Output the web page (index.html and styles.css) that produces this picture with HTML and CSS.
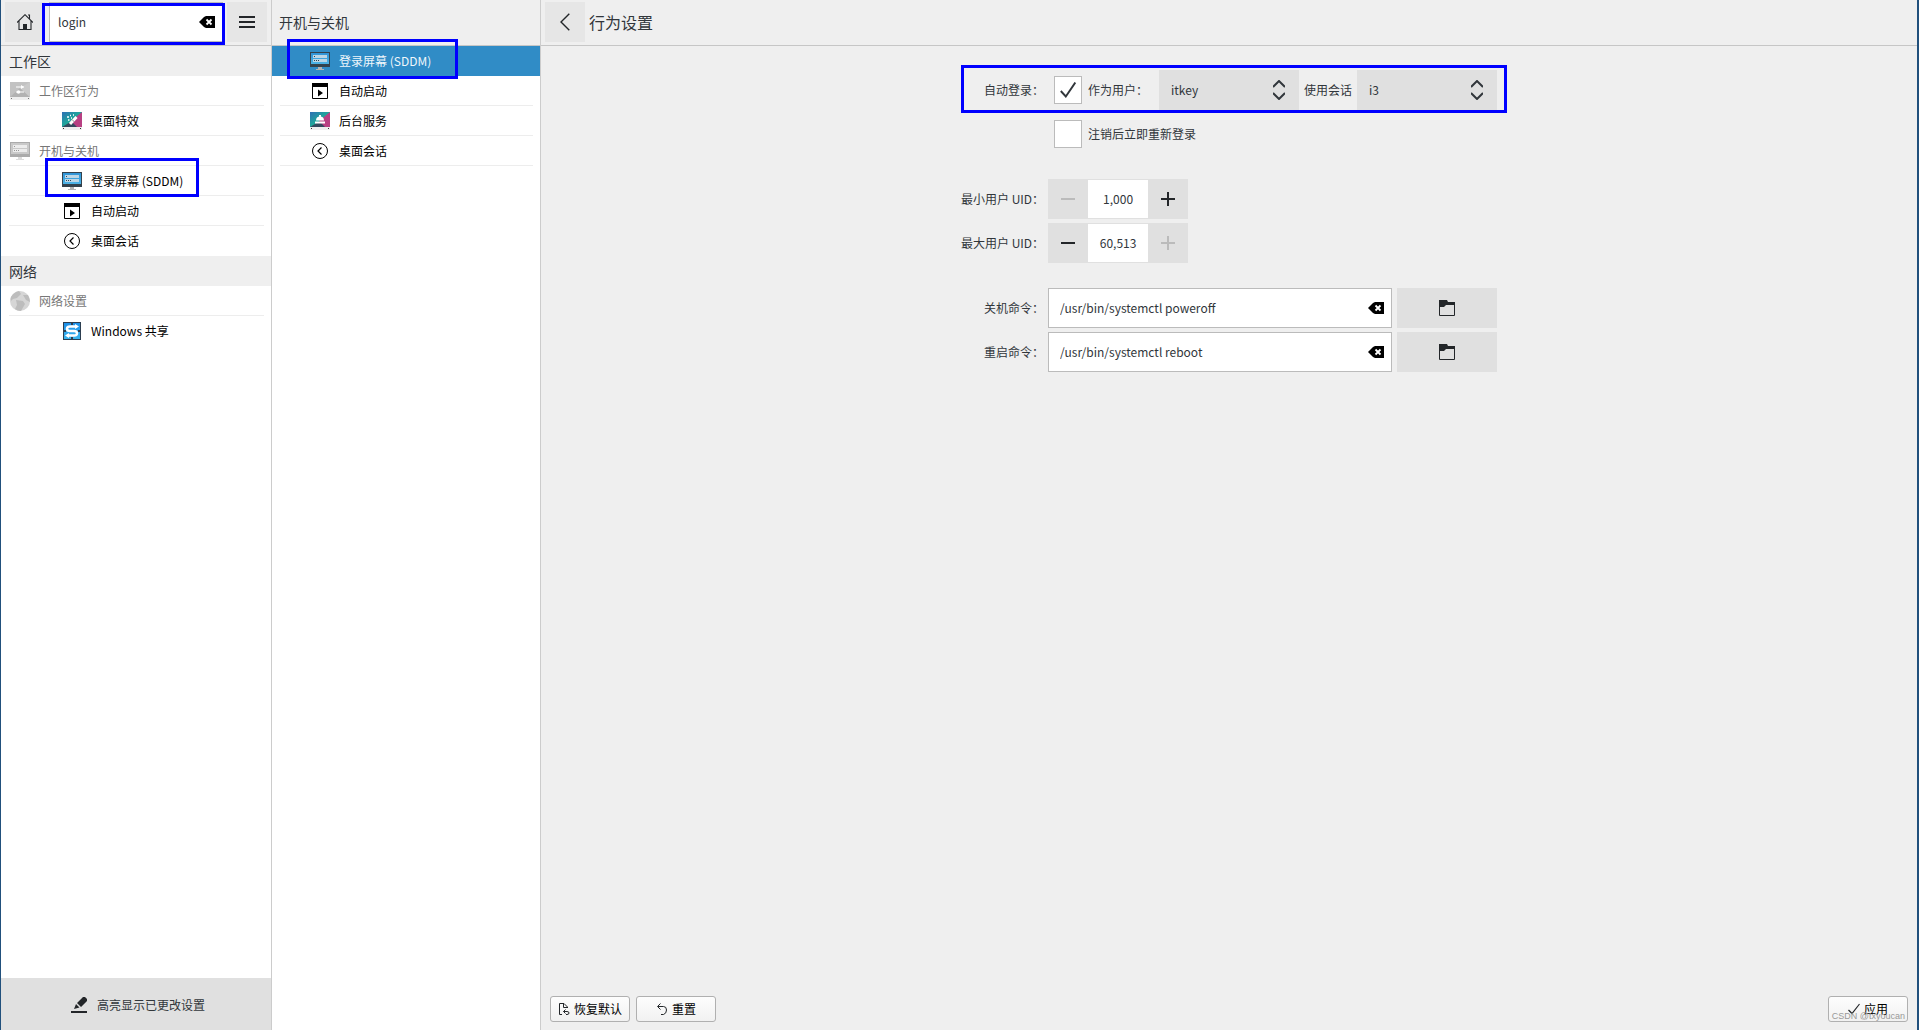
FILE: index.html
```html
<!DOCTYPE html>
<html lang="zh-CN">
<head>
<meta charset="utf-8">
<title>行为设置</title>
<link rel="stylesheet" href="styles.css">
</head>
<body>
<svg class="sprite" aria-hidden="true">
  <defs>
    <linearGradient id="sky" x1="0" y1="0" x2="1" y2="1"><stop offset="0" stop-color="#2f6fb5"/><stop offset=".5" stop-color="#1ea89a"/><stop offset="1" stop-color="#1abc9c"/></linearGradient>
    <linearGradient id="screen" x1="0" y1="0" x2="0" y2="1"><stop offset="0" stop-color="#2f93d6"/><stop offset="1" stop-color="#4db3e6"/></linearGradient>
    <linearGradient id="net" x1="0" y1="0" x2="0" y2="1"><stop offset="0" stop-color="#1d8fe8"/><stop offset="1" stop-color="#3bb5ee"/></linearGradient>
  </defs>
  <symbol id="i-clear" viewBox="0 0 16 12"><path d="M0 6 5 1 7 0H16V12H7L5 11Z" fill="#000"/><path d="M7.500 3.500 12.500 8.500M12.500 3.500 7.500 8.500" stroke="#fff" stroke-width="1.800"/></symbol>
  <symbol id="i-play" viewBox="0 0 16 16"><path d="M.5.5h15v15H.5z" fill="#fff" stroke="#000"/><path d="M0 0h16v4H0zM6 6.500v7l5-3.500z" fill="#000"/></symbol>
  <symbol id="i-session" viewBox="0 0 16 16"><circle cx="8" cy="8" r="7.500" fill="none" stroke="#000"/><path d="M9.500 4.500 6 8l3.500 3.500" fill="none" stroke="#000" stroke-width="1.200"/></symbol>
  <symbol id="i-screen" viewBox="0 0 20 18"><path d="M0 0h20v15H0z" fill="#34424d"/><path d="M1 1h18v11H1z" fill="url(#screen)"/><path d="M3 3h14v3H3zM3 7h14v3H3z" fill="#bcd6e6"/><path d="M4 4.500h1M4 8.500h1M6 8.500h1M8 8.500h1" stroke="#345"/><path d="M8 15h4v2h2v1H6v-1h2z" fill="#b4b4b4"/></symbol>
  <symbol id="i-screen-gray" viewBox="0 0 20 18"><path d="M0 0h20v15H0z" fill="#ababab"/><path d="M1 1h18v11H1z" fill="#c9c9c9"/><path d="M3 3h14v3H3zM3 7h14v3H3z" fill="#ececec"/><path d="M4 4.500h1M4 8.500h1M6 8.500h1M8 8.500h1" stroke="#999"/><path d="M8 15h4v2h2v1H6v-1h2z" fill="#ddd"/></symbol>
  <symbol id="i-folder" viewBox="0 0 16 16"><path d="M.5 1v14.500h15V2.500H9" fill="none" stroke="#232629"/><path d="M0 0h8l1 2h7v3H7L5 7H0z" fill="#232629"/></symbol>
  <symbol id="i-updown" viewBox="0 0 12 20"><path d="M0 7 6 1l6 6M0 13l6 6 6-6" fill="none" stroke="#31363b" stroke-width="2"/></symbol>
</svg>

<div class="window">
  <aside class="sidebar">
    <div class="bar tools">
      <button class="tool" aria-label="主页"><svg width="16" height="16" viewBox="0 0 16 16"><path d="M0 8.500 8 .7l8 7.800M2 7v8.500h12V7M12.500 5V1H11" fill="none" stroke="#232629" stroke-width="1.100"/><path d="M6 10h4v6H6z" fill="#232629"/></svg></button>
      <div class="search marked">
        <input type="text" value="login" aria-label="搜索">
        <button class="clear" aria-label="清除"><svg width="16" height="12"><use href="#i-clear"/></svg></button>
      </div>
      <button class="tool" aria-label="菜单"><svg width="16" height="12" viewBox="0 0 16 12"><path d="M0 1h16M0 6h16M0 11h16" stroke="#232629" stroke-width="2"/></svg></button>
    </div>
    <nav class="nav">
      <h2 class="section">工作区</h2>
      <a href="#" class="row group"><svg width="20" height="18" viewBox="0 0 20 18"><path d="M0 0h20v15H0z" fill="#c2c2c2"/><path d="M0 15 10 6l10 9z" fill="#b2b2b2"/><path d="M20 0v15L10 6z" fill="#cacaca"/><path d="M0 15h20v3H0z" fill="#eee"/><path d="M1 16.500h1M18 16.500h1" stroke="#777"/><path d="M6 5h8M6 10h8" stroke="#fff" stroke-width="1.200"/><path d="m11 3 3 2-3 2z" fill="#fff"/><circle cx="8.500" cy="10" r="1.800" fill="#fff"/></svg>工作区行为</a>
      <a href="#" class="row child"><svg width="20" height="18" viewBox="0 0 20 18"><path d="M0 0h20v15H0z" fill="url(#sky)"/><path d="M0 15 10 9l6 6z" fill="#34495e"/><path d="M20 0v15h-5L9 9z" fill="#b84083"/><path d="M0 15h20v3H0z" fill="#eee"/><path d="M1 16.500h1M18 16.500h1" stroke="#333"/><path d="m8 12 6.500-7" stroke="#fff" stroke-width="3"/><path d="m10 7.500 2.500 2.500" stroke="#888"/><path d="M5 5h2M8 3.500h1M6 8h1.500M9 6h1M11 3h1" stroke="#fff" stroke-width="1.300"/></svg>桌面特效</a>
      <a href="#" class="row group"><svg width="20" height="18"><use href="#i-screen-gray"/></svg>开机与关机</a>
      <a href="#" class="row child"><svg width="20" height="18"><use href="#i-screen"/></svg>登录屏幕 (SDDM)<span class="frame frame-nav"></span></a>
      <a href="#" class="row child"><svg class="small" width="16" height="16"><use href="#i-play"/></svg>自动启动</a>
      <a href="#" class="row child last"><svg class="small" width="16" height="16"><use href="#i-session"/></svg>桌面会话</a>
      <h2 class="section">网络</h2>
      <a href="#" class="row group"><svg width="20" height="20" viewBox="0 0 20 20"><circle cx="10" cy="10" r="10" fill="#d6d6d6"/><path d="M1 6Q4 1 9 0l2 3-4 4-4 1-2 2Q0 8 1 6zM6 9l7 1 2 3-4 7Q7 20 5 18l2-4zM13 4l5 0q2 4 2 7l-4-2z" fill="#bdbdbd"/></svg>网络设置</a>
      <a href="#" class="row child last"><svg class="small mid" width="18" height="18" viewBox="0 0 18 18"><path d="M0 0h18v18H0z" fill="#2c3e50"/><path d="M1 1h16v16H1z" fill="url(#net)"/><path d="M9 0v3M9 15v3M0 9h3M15 9h3" stroke="#2c3e50" stroke-width="2"/><path d="M14 4.500H7Q4 4.500 4 6.700T7 9h4q3 0 3 2.300T11 13.500H4" fill="none" stroke="#fff" stroke-width="2.600"/><path d="m12 2 4 2.500L12 7zM6 11l-4 2.500L6 16z" fill="#fff"/></svg>Windows 共享</a>
    </nav>
    <button class="highlight"><svg width="16" height="16" viewBox="0 0 16 16"><path d="M0 14h16v2H0zM3 12l2-5 3.500 3.500zM6 6l6-6h2l2 2v2l-6 6z" fill="#232629"/></svg>高亮显示已更改设置</button>
  </aside>

  <section class="modules">
    <h2 class="bar title">开机与关机</h2>
    <nav class="nav">
      <a href="#" class="row child selected"><svg width="20" height="18"><use href="#i-screen"/></svg>登录屏幕 (SDDM)<span class="frame frame-module"></span></a>
      <a href="#" class="row child"><svg class="small" width="16" height="16"><use href="#i-play"/></svg>自动启动</a>
      <a href="#" class="row child"><svg width="20" height="18" viewBox="0 0 20 18"><path d="M0 0h20v15H0z" fill="url(#sky)"/><path d="M0 15 10 9l6 6z" fill="#34495e"/><path d="M20 0v15h-5L9 9z" fill="#b84083"/><path d="M0 15h20v3H0z" fill="#eee"/><path d="M1 16.500h1M18 16.500h1" stroke="#333"/><path d="M6 8.500q0-4 4-4t4 4zM5 9.500h10v2H5zM9 3h2v1.500H9z" fill="#fff"/></svg>后台服务</a>
      <a href="#" class="row child"><svg class="small" width="16" height="16"><use href="#i-session"/></svg>桌面会话</a>
    </nav>
  </section>

  <main class="page">
    <header class="bar heading">
      <button class="tool" aria-label="返回"><svg width="10" height="18" viewBox="0 0 10 18"><path d="M9.300.7 1 9l8.300 8.300" fill="none" stroke="#232629" stroke-width="1.400"/></svg></button>
      <h1>行为设置</h1>
    </header>
    <form class="form">
      <label for="auto">自动登录：</label>
      <div class="field login">
        <span class="check"><input type="checkbox" id="auto" checked><svg width="16" height="16" viewBox="0 0 16 16"><path d="m.8 9 5 5.500L15.300.5" fill="none" stroke="#31363b" stroke-width="1.900"/></svg></span>
        <label for="user" class="user-label">作为用户：</label>
        <span class="combo"><select id="user"><option>itkey</option></select><svg width="12" height="20"><use href="#i-updown"/></svg></span>
        <label for="session" class="session-label">使用会话</label>
        <span class="combo"><select id="session"><option>i3</option></select><svg width="12" height="20"><use href="#i-updown"/></svg></span>
        <span class="frame frame-login"></span>
      </div>
      <div class="field login"><span class="check"><input type="checkbox" id="relogin"></span><label for="relogin">注销后立即重新登录</label></div>

      <label for="min" class="gap">最小用户 UID：</label>
      <div class="field gap"><div class="spin"><button type="button" disabled aria-label="减少"><svg width="14" height="14" viewBox="0 0 14 14"><path d="M0 7h14"/></svg></button><input type="text" id="min" value="1,000"><button type="button" aria-label="增加"><svg width="14" height="14" viewBox="0 0 14 14"><path d="M0 7h14M7 0v14"/></svg></button></div></div>
      <label for="max">最大用户 UID：</label>
      <div class="field"><div class="spin"><button type="button" aria-label="减少"><svg width="14" height="14" viewBox="0 0 14 14"><path d="M0 7h14"/></svg></button><input type="text" id="max" value="60,513"><button type="button" disabled aria-label="增加"><svg width="14" height="14" viewBox="0 0 14 14"><path d="M0 7h14M7 0v14"/></svg></button></div></div>

      <label for="halt" class="gap">关机命令：</label>
      <div class="field gap command"><div class="path"><input type="text" id="halt" value="/usr/bin/systemctl poweroff"><button type="button" class="clear" aria-label="清除"><svg width="16" height="12"><use href="#i-clear"/></svg></button></div><button type="button" class="browse" aria-label="浏览"><svg width="16" height="16"><use href="#i-folder"/></svg></button></div>
      <label for="reboot">重启命令：</label>
      <div class="field command"><div class="path"><input type="text" id="reboot" value="/usr/bin/systemctl reboot"><button type="button" class="clear" aria-label="清除"><svg width="16" height="12"><use href="#i-clear"/></svg></button></div><button type="button" class="browse" aria-label="浏览"><svg width="16" height="16"><use href="#i-folder"/></svg></button></div>
    </form>
    <footer class="actions">
      <button class="action"><svg width="12" height="12" viewBox="0 0 12 12"><path d="M4 11.500H1.500V.5H6l3.500 3.500v1M5.500.5V4.500H9.500M5.500 8.500H9q2 0 2 1.500T9 11.500H8M7.500 6.500l-2 2 2 2" fill="none" stroke="#232629"/></svg>恢复默认</button>
      <button class="action"><svg width="12" height="12" viewBox="0 0 12 12"><path d="M4.500.5 1.500 3.500l3 3M2 3.500h5.500q3 0 3 3.500t-3 4.500H5" fill="none" stroke="#232629"/></svg>重置</button>
      <button class="action apply"><svg width="12" height="12" viewBox="0 0 12 12"><path d="m.5 7 3.500 3.500L11.500 1" fill="none" stroke="#232629" stroke-width="1.200"/></svg>应用<span class="watermark">CSDN @txyoucan</span></button>
    </footer>
  </main>
</div>
</body>
</html>
```
FILE: styles.css
```css
* { box-sizing: border-box; }

body {
  margin: 0;
  background: #efefef;
  color: #31363b;
  font: 12px/18px "Noto Sans CJK SC", sans-serif;
}

button, input, select { font: inherit; color: inherit; border: 0; margin: 0; padding: 0; border-radius: 0; }
button { display: flex; align-items: center; justify-content: center; background: none; }
svg { display: block; flex: none; }
h1, h2 { margin: 0; font-weight: 400; }
.sprite { position: absolute; width: 0; height: 0; }

.window {
  display: grid;
  grid-template-columns: 271px 269px 1fr;
  min-height: 100vh;
  border: solid #21507c;
  border-width: 0 2px 0 1px;
}

.sidebar, .modules {
  display: flex;
  flex-direction: column;
  background: #fff;
  border-right: 1px solid #ccc;
}

.bar {
  display: flex;
  align-items: center;
  height: 46px;
  padding: 0 4px 2px;
  background: #efefef;
  border-bottom: 1px solid #c6c6c6;
}

.tools { gap: 4px; }
.tool { width: 40px; height: 40px; background: #e6e6e6; flex: none; }
.search { position: relative; flex: 1; display: flex; }
.search input { width: 100%; height: 40px; padding: 0 34px 0 8px; background: #fff; border: 1px solid #bbb; }
.clear { position: absolute; right: 8px; top: 0; height: 100%; width: 16px; }

/* Highlight frames lie over the controls they point out */
.frame, .marked::after {
  content: "";
  position: absolute;
  border: 3px solid #00f;
  pointer-events: none;
  z-index: 2;
}
.marked::after { inset: 1px -2px -3px -7px; }
.frame-nav { left: 44px; right: 72px; top: -8px; bottom: -1px; }
.frame-module { left: 15px; right: 82px; top: -7px; bottom: -3px; }
.frame-login { left: -87px; right: -10px; top: -5px; bottom: -3px; }

.title { padding: 0 7px 2px; font-size: 14px; }
.section { height: 30px; padding: 0 8px; background: #efefef; font-size: 14px; line-height: 30px; }

.row {
  position: relative;
  display: flex;
  align-items: center;
  gap: 9px;
  height: 30px;
  padding-left: 9px;
  color: #000;
  text-decoration: none;
}
.row:not(.last):not(.selected)::before {
  content: "";
  position: absolute;
  left: 8px;
  right: 7px;
  bottom: 0;
  border-bottom: 1px solid #ededed;
}
.group { color: #777; }
.child { padding-left: 61px; }
.modules .child { padding-left: 38px; }
.small { margin: 0 2px; }
.mid { margin: 0 1px; }
.selected { background: #308cc6; color: #eef6fb; }

.highlight { margin-top: auto; height: 52px; padding: 2px 0 0 4px; gap: 10px; background: #e0e0e0; }

.page { display: flex; flex-direction: column; }
.heading { gap: 4px; }
.heading h1 { font-size: 16px; line-height: 24px; }

.form {
  display: grid;
  grid-template-columns: max-content 449px;
  justify-content: center;
  align-items: center;
  gap: 4px;
  padding-top: 24px;
}
.form > label { text-align: right; }
.field { grid-column: 2; display: flex; align-items: center; position: relative; height: 40px; }
.gap { margin-top: 21px; }
.login { padding-left: 6px; gap: 5px; }
.check { position: relative; width: 28px; height: 28px; margin-right: 1px; }
.check input { appearance: none; display: block; width: 28px; height: 28px; background: #fff; border: 1px solid #bbb; }
.check svg { position: absolute; left: 6px; top: 6px; pointer-events: none; }
.user-label { margin-right: auto; }
.combo { position: relative; width: 140px; height: 40px; }
.combo select { appearance: none; width: 100%; height: 100%; padding-left: 12px; background: #e0e0e0; }
.combo svg { position: absolute; right: 14px; top: 10px; pointer-events: none; }

.spin { display: flex; width: 140px; height: 40px; border: solid #e0e0e0; border-width: 1px 0; }
.spin button { width: 40px; background: #e0e0e0; }
.spin input { width: 60px; text-align: center; background: #fff; }
.spin path { stroke: #232629; stroke-width: 2; }
.spin :disabled path { stroke: #bbb; }

.command { gap: 5px; }
.path { position: relative; flex: 1; }
.path input { display: block; width: 100%; height: 40px; padding: 0 34px 2px 11px; background: #fff; border: 1px solid #bbb; }
.browse { width: 100px; height: 40px; background: #e0e0e0; }

.actions { display: flex; gap: 6px; margin-top: auto; padding: 0 9px 8px; }
.action {
  position: relative;
  gap: 4px;
  width: 80px;
  height: 26px;
  color: #000;
  background: linear-gradient(#fdfdfd, #f1f1f1);
  border: 1px solid #b0b0b0;
  border-radius: 3px;
}
.apply { margin-left: auto; }
.watermark {
  position: absolute;
  right: 2px;
  bottom: -3px;
  color: #999;
  font: 9px/16px "Liberation Sans", sans-serif;
  white-space: nowrap;
}
```
